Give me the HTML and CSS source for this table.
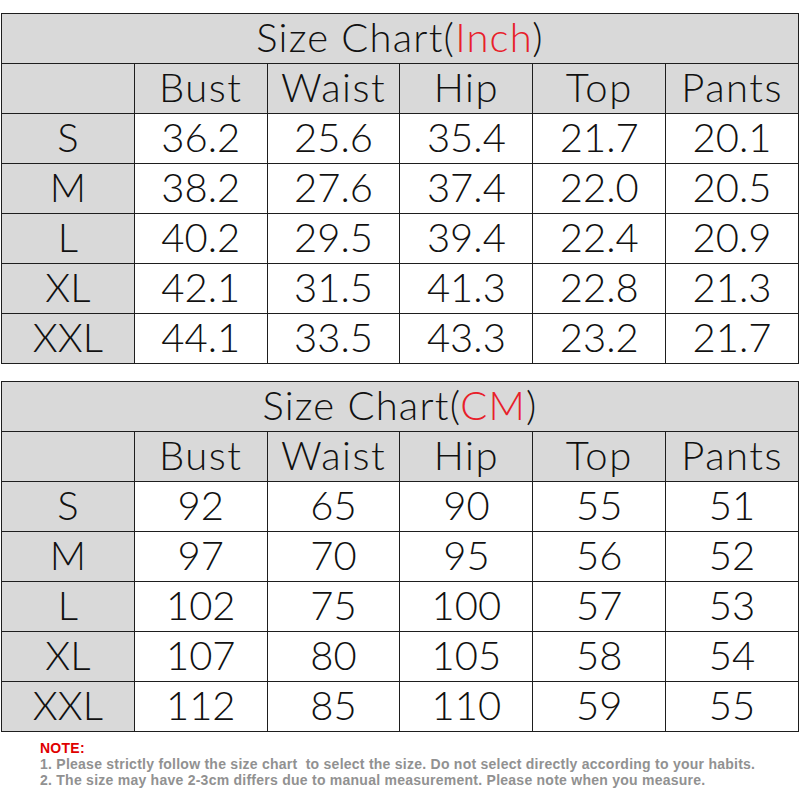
FILE: index.html
```html
<!DOCTYPE html>
<html>
<head>
<meta charset="utf-8">
<link rel="stylesheet" href="styles.css">
</head>
<body>
<div class="page">
  <table class="chart">
    <tr><td class="title" colspan="6">Size Chart(<span class="red">Inch</span>)</td></tr>
    <tr class="head"><td></td><td>Bust</td><td>Waist</td><td>Hip</td><td>Top</td><td>Pants</td></tr>
    <tr><td class="size">S</td><td>36.2</td><td>25.6</td><td>35.4</td><td>21.7</td><td>20.1</td></tr>
    <tr><td class="size">M</td><td>38.2</td><td>27.6</td><td>37.4</td><td>22.0</td><td>20.5</td></tr>
    <tr><td class="size">L</td><td>40.2</td><td>29.5</td><td>39.4</td><td>22.4</td><td>20.9</td></tr>
    <tr><td class="size">XL</td><td>42.1</td><td>31.5</td><td>41.3</td><td>22.8</td><td>21.3</td></tr>
    <tr><td class="size">XXL</td><td>44.1</td><td>33.5</td><td>43.3</td><td>23.2</td><td>21.7</td></tr>
  </table>
  <table class="chart">
    <tr><td class="title" colspan="6">Size Chart(<span class="red">CM</span>)</td></tr>
    <tr class="head"><td></td><td>Bust</td><td>Waist</td><td>Hip</td><td>Top</td><td>Pants</td></tr>
    <tr><td class="size">S</td><td>92</td><td>65</td><td>90</td><td>55</td><td>51</td></tr>
    <tr><td class="size">M</td><td>97</td><td>70</td><td>95</td><td>56</td><td>52</td></tr>
    <tr><td class="size">L</td><td>102</td><td>75</td><td>100</td><td>57</td><td>53</td></tr>
    <tr><td class="size">XL</td><td>107</td><td>80</td><td>105</td><td>58</td><td>54</td></tr>
    <tr><td class="size">XXL</td><td>112</td><td>85</td><td>110</td><td>59</td><td>55</td></tr>
  </table>
  <div class="notes">
    <div class="note-title">NOTE:</div>
    <div>1. Please strictly follow the size chart&nbsp; to select the size. Do not select directly according to your habits.</div>
    <div>2. The size may have 2-3cm differs due to manual measurement. Please note when you measure.</div>
  </div>
</div>
</body>
</html>
```

FILE: styles.css
```css
html, body {
  margin: 0;
  padding: 0;
  background: #fff;
}
.page {
  width: 800px;
  padding: 13px 0 0 1px;
  box-sizing: border-box;
  display: flex;
  flex-direction: column;
  gap: 17px;
}
.chart {
  border-collapse: collapse;
  table-layout: fixed;
  width: 798px;
  font-family: "Lato", "Noto Sans", sans-serif;
  font-weight: 300;
  font-size: 40px;
  color: #111;
}
.chart td {
  border: 1px solid #1e1e1e;
  height: 46px;
  padding: 0 0 3px 0;
  text-align: center;
  vertical-align: middle;
  line-height: 1;
  background: #fff;
}
.chart .title {
  background: #d9d9d9;
  letter-spacing: 1.2px;
}
.chart .head td {
  background: #d9d9d9;
  letter-spacing: 1.5px;
}
.chart .size {
  background: #d9d9d9;
}
.red {
  color: #e8202a;
}
.notes {
  margin-top: -9px;
  padding-left: 39px;
  font-family: "Liberation Sans", Arial, sans-serif;
  font-weight: bold;
  font-size: 14px;
  line-height: 16px;
  letter-spacing: 0.25px;
  color: #919191;
}
.note-title {
  color: #e00000;
}
```
